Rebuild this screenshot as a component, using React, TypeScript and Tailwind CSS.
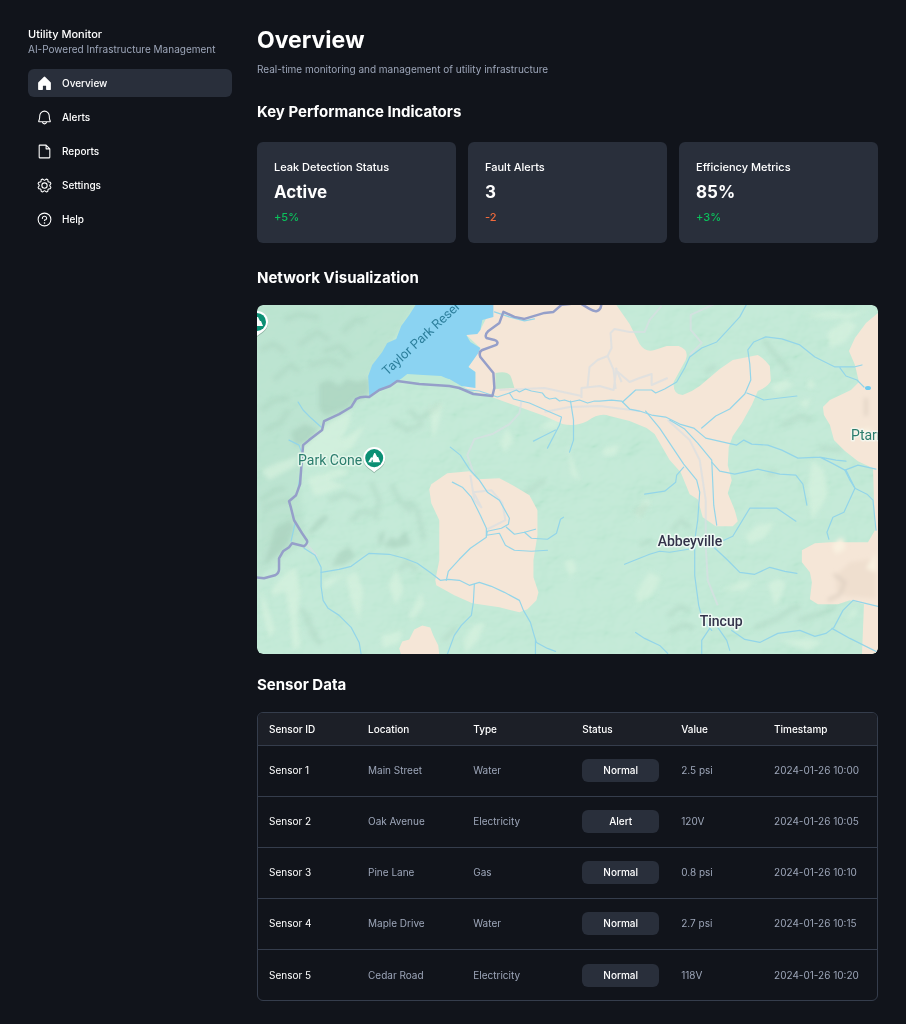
import React from "react";
import { PiBell, PiFile, PiGear, PiHouseFill, PiQuestion } from "react-icons/pi";
import type { IconType } from "react-icons";

type NavItem = { label: string; icon: IconType; active?: boolean };
type Kpi = { label: string; value: string; delta: string; up: boolean };
type SensorRow = { id: string; location: string; type: string; status: string; value: string; timestamp: string };

const NAV: NavItem[] = [
  { label: "Overview", icon: PiHouseFill, active: true },
  { label: "Alerts", icon: PiBell },
  { label: "Reports", icon: PiFile },
  { label: "Settings", icon: PiGear },
  { label: "Help", icon: PiQuestion },
];

const KPIS: Kpi[] = [
  { label: "Leak Detection Status", value: "Active", delta: "+5%", up: true },
  { label: "Fault Alerts", value: "3", delta: "-2", up: false },
  { label: "Efficiency Metrics", value: "85%", delta: "+3%", up: true },
];

const SENSORS: SensorRow[] = [
  { id: "Sensor 1", location: "Main Street", type: "Water", status: "Normal", value: "2.5 psi", timestamp: "2024-01-26 10:00" },
  { id: "Sensor 2", location: "Oak Avenue", type: "Electricity", status: "Alert", value: "120V", timestamp: "2024-01-26 10:05" },
  { id: "Sensor 3", location: "Pine Lane", type: "Gas", status: "Normal", value: "0.8 psi", timestamp: "2024-01-26 10:10" },
  { id: "Sensor 4", location: "Maple Drive", type: "Water", status: "Normal", value: "2.7 psi", timestamp: "2024-01-26 10:15" },
  { id: "Sensor 5", location: "Cedar Road", type: "Electricity", status: "Normal", value: "118V", timestamp: "2024-01-26 10:20" },
];

// open land
const SAND = [
  "M494 304H616L630 324L640 344Q646 353 655 350L667 346H679Q690 350 686 360L674 382Q673 395 683 395Q692 392 700 386L720 369L733 360L758 355Q764 358 770 366L771 381Q768 387 758 391L752 405L742 423L733 436L729 447L728 465L732 480L728 493L735 510L738 521L733 526H716L703 517L698 499L690 494L681 472L670 460L655 434L647 428L630 421L610 416Q600 412 588 421Q576 427 563 424L545 416L520 407L495 398L470 390L450 378L476 388V372L469 367L481 348L467 335L481 330Z",
  "M878 313L866 323L855 338L849 351L855 365L859 382L851 390L830 400L823 407L824 415L830 425L834 440L845 451L858 461L873 468L875 530L868 542H830L815 543L802 550V562L810 572L812 582L810 599L818 604H838L850 600L864 604L862 654H878Z",
  "M430 489L432 484L448 473L470 471L478 479L500 478L515 486L530 495L538 510V535L534 560V577L539 592L537 600L528 609L520 612L500 607L473 603L455 595L437 585L436 580L440 560V520L432 503Z",
  "M400 648L403 641L410 639L415 629L423 625L431 627L434 635L439 645L440 655H402Z",
];

const STREAMS = [
  "M299 402L304 410L312 418L322 427M290 440L300 445L302 451M302 470L299 488M296 523L292 541M305 548L316 555L322 567V586L324 600L329 608L340 615L352 627L360 642L362 654",
  "M322 572L340 569L352 566L363 558L370 553L390 554L405 558L418 563L432 573L441 580L449 579L460 580L470 585L480 582L492 586L505 592L520 600L524 610L531 622L535 636L537 642L548 648L556 651M536 640V654",
  "M447 580L449 571L460 559L471 548L487 537L487 528L481 515L472 497L463 487L453 482M475 584L474 602L472 615L462 625L455 635L448 654",
  "M451 447L461 455L470 469L480 480L488 492L500 500L510 518L509 524L502 528L488 531L487 536M507 527L515 534L525 532L536 529M525 532L532 538L548 539L557 533L561 519L564 517M487 535L500 533L506 545L515 550L532 551L548 550",
  "M460 389L480 391L498 397L510 393L517 390L520 392L526 389L532 391L543 393L546 397L550 399L556 398L560 401L565 400L571 402L580 400L588 403L595 401L600 401L612 400L622 401L625 404L630 409L640 411L652 415L666 417L680 424L694 428L706 438L728 443L737 445L744 440L752 444L768 445L782 450L798 458L820 457L836 460L846 461M820 457L832 463L845 470L850 480L855 488L867 494L873 500L876 530",
  "M510 393L514 399L530 403L548 411L562 417L560 425L548 448M556 430L544 436L534 441M571 401L574 420L574 440L570 452",
  "M623 402L636 390H652L656 393L665 389L677 382L685 368L690 357L702 348L717 342L730 328L740 317L747 304",
  "M702 428L716 416L730 409L745 394L751 380L750 364L748 350L754 342L766 337L782 339L800 345L815 357L835 367H854L862 365M840 368L846 376L857 380L864 387M747 393L755 396L764 400L780 398L797 396",
  "M646 411L660 428L672 446L684 464L697 480L700 492L698 520L695 540L695 575L699 605L703 620L712 630M670 420L685 429L698 443L712 460L713 482L714 505L717 525",
  "M712 462L720 471L735 474L758 469L780 474L796 475L803 484L807 505M684 467L677 475L676 482L665 491L645 494",
  "M625 564L650 554L660 551L670 552L695 548M722 541L733 536L750 508H777L796 521M712 545L728 560L740 572L755 574L770 567L785 571L797 573",
  "M846 470L855 488L844 512L833 517L827 532L829 539M845 470L858 465L876 469M732 630L745 639L760 642L778 633L800 630L815 636L826 633L834 627L843 610L853 600L878 606M832 628L850 638L878 652M718 627L727 640L730 650M710 628L702 640V654M636 632L645 638L660 645L668 653",
  "M495 312L510 317L525 321L535 319",
];

const TRAILS =
  "M522 401L520 413L510 424L493 434L475 439L468 455L475 475M588 387L590 367L598 360L608 356L612 348L611 333L615 329L630 332L645 332L650 320L662 306M608 356L614 370L616 389M616 368L622 382M616 370L630 382L640 378L652 374V385L668 378M582 398V388L600 386L614 390L617 368M500 390L545 388L582 396M640 411L600 406L570 407L545 412M690 355L702 343L691 330V315L715 304M668 420L690 440L700 460L706 500V545L708 580L718 605M471 475L475 500L482 507L474 492L492 490L503 503L506 520L488 529M308 544L318 556";

// hillshade, sunlit and shaded sides of the ridges
const LIGHT = [
  "M304 446L330 422L352 410L350 424L342 440L366 425L352 450L318 462L304 468Z",
  "M308 478L340 468L352 472L330 480L346 486L316 496Z",
  "M272 590L288 571L297 568L301 590L298 620L302 645L294 650L291 615L286 590L274 596Z",
  "M261 590L268 605L276 630L270 638L264 615Z",
  "M347 577L357 571L364 590L360 620L352 600Z",
  "M389 585L398 570L404 590L397 605Z",
  "M410 615L422 592L425 604L413 620Z",
  "M324 580L350 572L338 580L325 590Z",
  "M500 443L508 428L514 440L506 452Z",
  "M568 444L573 460L580 480L572 475Z",
  "M555 416L562 420L556 430L540 428Z",
  "M827 333L846 320L857 325L845 342L830 348Z",
  "M770 386L786 379L793 385L778 394Z",
  "M798 402L812 398L806 408Z",
  "M808 380L814 380L814 388L808 388Z",
  "M636 592L650 572L662 578L652 596L638 604Z",
  "M565 561L574 559L577 570L570 577Z",
  "M635 512L645 498L652 501L639 519Z",
  "M804 316L828 311L850 314L870 308L850 319L820 318Z",
  "M812 460L824 470L828 495L812 520L808 490Z",
  "M745 535L758 525L775 522L765 537L750 544Z",
  "M722 590L742 580L754 582L744 590Z",
  "M768 584L778 578L786 583L776 608Z",
  "M780 640L810 638L822 642L808 650Z",
  "M854 608L850 614L846 622L858 612Z",
  "M464 640L474 625L486 622L478 640L466 653Z",
  "M382 635L404 629L400 642L384 648Z",
  "M430 408L444 402L440 420L434 440Z",
  "M603 448L620 445L616 455L604 456Z",
  "M262 470L280 462L300 456L296 466L270 480Z",
];

const SHADE = [
  "M320 384L330 380L340 386L348 379L358 382L370 379V394L356 399L348 408L326 416L320 408Z",
  "M292 432L306 424L318 430L308 442L296 446Z",
  "M265 565L276 528L290 520L296 526L288 545L276 556Z",
  "M332 566L340 552L350 546L356 556L346 564Z",
  "M378 548L380 534L386 530L384 542L378 546Z",
  "M384 546L392 536L398 540L406 530L412 544L396 548Z",
  "M308 534L318 520L326 514L330 518L312 534Z",
];

const RIDGES =
  "M262 500L276 490L286 488M264 508L280 502L292 500M300 345L318 332L330 340M275 380L292 365L300 372M262 350L274 344L286 352M286 320L300 314L320 318M324 352L340 346L352 358M262 410L276 400L290 398M266 430L280 424L290 410M344 332L356 320L366 322M310 366L330 360L344 366M410 410L420 420L440 404M392 420L408 430L424 424M372 482L380 500L376 520M392 484L400 500L412 512M408 500L418 510L425 540M352 520L362 512L376 512M330 500L346 494L362 500M510 500L528 492L545 480M634 512L646 506L640 516M754 628L778 618L790 610L800 606M798 620L824 612L836 606M820 448L842 450M768 474L776 472M668 616L680 606L690 610M670 632L684 624L694 628M672 530L682 520L690 528M302 608L312 622M306 618L318 636M310 630L322 644M444 640L456 628M400 570L408 562L418 570M640 545L652 540M706 372L716 366M764 340L776 356L790 372M782 426L800 416L812 420";

function MapPin({ x, y }: { x: number; y: number }) {
  return (
    <g transform={`translate(${x} ${y})`}>
      <path d="M0 14C-3 11 -11 8 -11 0A11 11 0 1 1 11 0C11 8 3 11 0 14Z" fill="#5f8577" opacity="0.5" transform="translate(0 1)" />
      <path d="M0 14C-3 11 -11 8 -11 0A11 11 0 1 1 11 0C11 8 3 11 0 14Z" fill="#fff" />
      <circle r="9" fill="#0b8f74" />
      <path d="M-6 4L-3 -1L-2 0L0 -5L1 -5L3 -1L4 -1L6 4Z" fill="#fff" />
      <path d="M-3 4L-2 1L-1 4Z" fill="#0b8f74" />
    </g>
  );
}

function NetworkMap() {
  return (
    <svg viewBox="258 305 620 349" preserveAspectRatio="xMidYMid slice" role="img" aria-label="Network map" className="block aspect-video w-full rounded-md">
      <defs>
        <filter id="soften" x="-20%" y="-20%" width="140%" height="140%">
          <feGaussianBlur stdDeviation="2" />
        </filter>
        <filter id="relief" x="0" y="0" width="100%" height="100%">
          <feTurbulence type="fractalNoise" baseFrequency="0.022 0.03" numOctaves="4" seed="8" result="noise" />
          <feDiffuseLighting in="noise" surfaceScale="12" lightingColor="#ffffff">
            <feDistantLight azimuth="225" elevation="50" />
          </feDiffuseLighting>
        </filter>
      </defs>

      <rect x="257" y="304" width="622" height="351" fill="#bfe8d4" />
      <rect x="257" y="304" width="622" height="351" filter="url(#relief)" opacity="0.2" className="mix-blend-soft-light" />
      <path d="M258 304H417L370 375V395L304 445L300 490L308 541L258 577Z" fill="#b2dbc7" opacity="0.4" filter="url(#soften)" />
      <g fill="#d9f3e0" opacity="0.65" filter="url(#soften)">
        {LIGHT.map((d) => <path key={d} d={d} />)}
      </g>
      <g fill="#a3cbb7" opacity="0.5" filter="url(#soften)">
        {SHADE.map((d) => <path key={d} d={d} />)}
      </g>
      <path d={RIDGES} fill="none" stroke="#a3cbb7" strokeWidth="5" strokeLinejoin="round" opacity="0.3" filter="url(#soften)" />

      <g fill="#f5e6d7">
        {SAND.map((d) => <path key={d} d={d} />)}
      </g>
      <g filter="url(#soften)">
        <path d="M836 575L850 562L876 558V598L846 596L836 590Z" fill="#efdfcf" />
        <path d="M834 574L845 582L840 594L828 600M866 398V416" fill="none" stroke="#dfd1c3" strokeWidth="3" />
        <path d="M832 545L842 537L846 548L836 554ZM866 568L876 552V572ZM856 430L872 428L868 440Z" fill="#f9f1e0" />
      </g>
      <path d="M496 373Q510 370 512 378L515 388L496 389Z" fill="#c1e6d0" />
      <path d="M417 304L410 315L402 326L397 339L388 343L383 352L373 365L369 376L370 396L380 390L391 386L398 381L410 375L425 376L450 379L462 386L476 388V372L469 367L479 353L481 348L471 342L467 335L478 334L481 330L483 320L494 317V304Z" fill="#8bd3f2" />
      <path d="M398 382L408 374L424 375L442 376L451 380L458 386Z" fill="#c1ead6" />

      <path d={TRAILS} fill="none" stroke="#d8dee2" strokeWidth="2" opacity="0.7" strokeLinejoin="round" />
      <g fill="none" stroke="#93d5e9" strokeWidth="1.200" strokeLinejoin="round" strokeLinecap="round">
        {STREAMS.map((d) => <path key={d} d={d} />)}
      </g>
      <ellipse cx="868" cy="388" rx="3" ry="2" fill="#6fcbf0" />
      <path
        d="M257 577L265 578L276 575Q280 573 280 569V558L284 551L290 547L293 543L305 546Q310 542 307 539L303 533L295 520L292 508L290 501L297 495L301 484L302 470L304 445L310 440L323 430L325 421L340 414L352 407L357 399Q362 396 370 397L380 390L391 386L398 381L420 384L450 386L460 388L474 394L493 396L495 388L494 373L481 357Q479 352 483 350L497 345Q500 342 495 340L487 338Q485 335 489 331L500 323L504 312L515 317L525 319L545 313L554 312L562 305L580 303L590 309Q598 314 601 308L602 304"
        fill="none"
        stroke="#959fc9"
        strokeWidth="2.500"
        strokeLinejoin="round"
      />

      <g className="font-['Roboto',sans-serif] text-[14px]" strokeLinejoin="round" strokeWidth="3" paintOrder="stroke">
        <text transform="translate(388 376) rotate(-43)" fill="#2d7f9c" className="text-[13px]">Taylor Park Reser</text>
        <text x="299" y="465" fill="#2b7d6d" stroke="#e2f6ea">Park Cone</text>
        <text x="851" y="440" fill="#2b7d6d" stroke="#f5f5ec">Ptarm</text>
        <g className="font-medium" fill="#33334a" stroke="#eefaf4">
          <text x="658" y="546">Abbeyville</text>
          <text x="700" y="626">Tincup</text>
        </g>
      </g>
      <MapPin x={375} y={458} />
      <MapPin x={258} y={322} />
    </svg>
  );
}

function SectionTitle({ children }: { children: React.ReactNode }) {
  return <h2 className="text-[15px] font-bold leading-5">{children}</h2>;
}

export default function App() {
  return (
    <div className="flex min-h-screen gap-[25px] bg-[#11141b] px-7 pb-[22px] pt-[26px] font-['Inter',sans-serif] text-white">
      <aside className="w-[204px] shrink-0">
        <div className="text-[11px] font-medium leading-4">Utility Monitor</div>
        <p className="whitespace-nowrap text-[10px] leading-[15px] text-[#9da6b9]">AI-Powered Infrastructure Management</p>
        <nav className="mt-3 flex flex-col gap-1.5">
          {NAV.map(({ label, icon: Icon, active }) => (
            <a key={label} href="#" className={`flex h-7 items-center gap-[9px] rounded-md px-2 text-[10px] font-medium ${active ? "bg-[#292f3b]" : ""}`}>
              <Icon className="size-[17px]" />
              {label}
            </a>
          ))}
        </nav>
      </aside>

      <main className="min-w-0 flex-1">
        <h1 className="text-[23px] font-bold leading-7">Overview</h1>
        <p className="mt-2 text-[10px] leading-[15px] text-[#9da6b9]">Real-time monitoring and management of utility infrastructure</p>

        <section className="mt-[25px]">
          <SectionTitle>Key Performance Indicators</SectionTitle>
          <div className="mt-5 grid grid-cols-3 gap-3">
            {KPIS.map((k) => (
              <div key={k.label} className="flex flex-col gap-1.5 rounded-md bg-[#292f3b] p-[17px]">
                <p className="text-[11px] font-medium leading-[17px]">{k.label}</p>
                <p className="text-[17px] font-bold leading-[21px]">{k.value}</p>
                <p className={`text-[11px] font-medium leading-[17px] ${k.up ? "text-[#0bc05c]" : "text-[#f06a3c]"}`}>{k.delta}</p>
              </div>
            ))}
          </div>
        </section>

        <section className="mt-[25px]">
          <SectionTitle>Network Visualization</SectionTitle>
          <div className="mt-[17px] overflow-hidden rounded-md">
            <NetworkMap />
          </div>
        </section>

        <section className="mt-[21px]">
          <SectionTitle>Sensor Data</SectionTitle>
          <div className="mt-[17px] overflow-hidden rounded-md border border-[#353d4c]">
            <table className="w-full table-fixed text-left text-[10px]">
              <colgroup>
                <col className="w-[16%]" />
                <col className="w-[17%]" />
                <col className="w-[17.6%]" />
                <col className="w-[16%]" />
                <col className="w-[15%]" />
                <col />
              </colgroup>
              <thead className="bg-[#1c1f27]">
                <tr className="h-8">
                  {["Sensor ID", "Location", "Type", "Status", "Value", "Timestamp"].map((h) => (
                    <th key={h} scope="col" className="px-[11px] font-medium">{h}</th>
                  ))}
                </tr>
              </thead>
              <tbody className="text-[#9da6b9]">
                {SENSORS.map((s) => (
                  <tr key={s.id} className="h-[51px] border-t border-[#353d4c]">
                    <td className="px-[11px] text-white">{s.id}</td>
                    <td className="px-[11px]">{s.location}</td>
                    <td className="px-[11px]">{s.type}</td>
                    <td className="px-[11px]">
                      <button className="block h-[23px] w-full rounded-md bg-[#292f3b] font-medium text-white">{s.status}</button>
                    </td>
                    <td className="px-[11px]">{s.value}</td>
                    <td className="whitespace-nowrap px-[11px]">{s.timestamp}</td>
                  </tr>
                ))}
              </tbody>
            </table>
          </div>
        </section>
      </main>
    </div>
  );
}
